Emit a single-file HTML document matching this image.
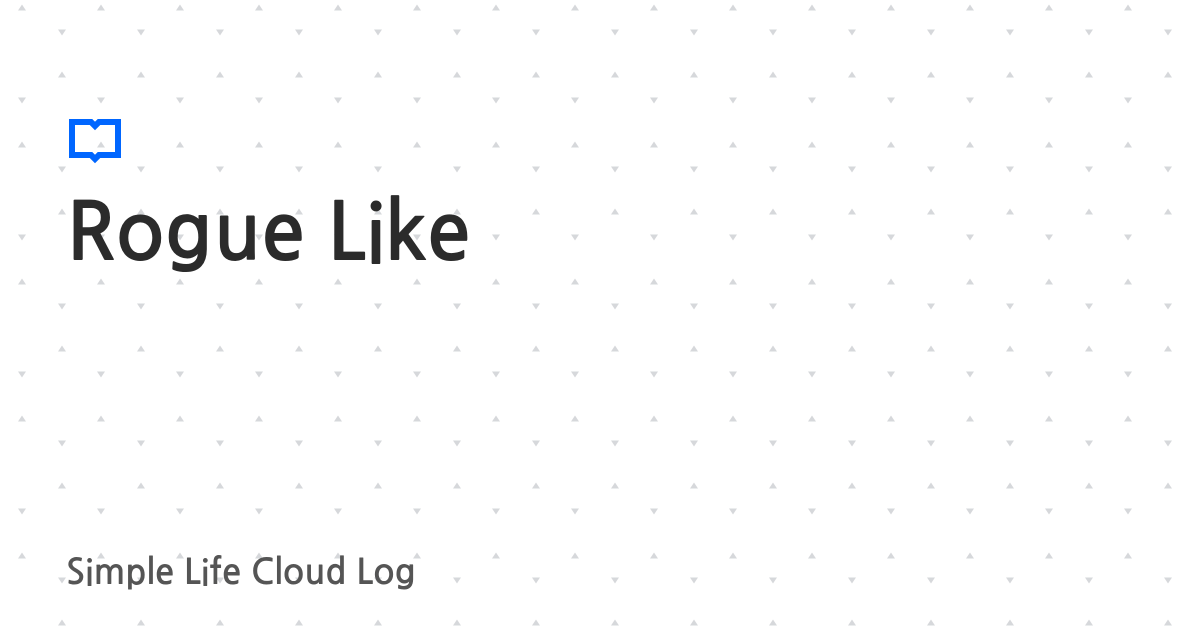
<!DOCTYPE html>
<html><head><style>
html,body{margin:0;padding:0;width:1200px;height:630px;background:#fff;overflow:hidden}
.t{position:absolute;left:66px;top:193px;font-family:"NanumGothic","Liberation Sans",sans-serif;font-weight:bold;font-size:80px;color:#2b2b2b;white-space:nowrap;letter-spacing:0}
.s{position:absolute;left:66px;top:556px;font-family:"NanumGothic","Liberation Sans",sans-serif;font-weight:bold;font-size:35px;color:#555;white-space:nowrap;letter-spacing:0}
</style></head><body>
<svg width="1200" height="630" style="position:absolute;left:0;top:0">
<defs><pattern id="p" x="22" y="8" width="79" height="137" patternUnits="userSpaceOnUse">
<g fill="#d6d8db">
<path d="M-4 2.5 L0 -3.5 L4 2.5Z"/><path d="M75 2.5 L79 -3.5 L83 2.5Z"/>
<path d="M-4 139.5 L0 133.5 L4 139.5Z"/><path d="M75 139.5 L79 133.5 L83 139.5Z"/>
<path d="M36 21.5 L44 21.5 L40 27.5Z"/>
<path d="M36 69.5 L40 63.5 L44 69.5Z"/>
<path d="M-4 89.5 L4 89.5 L0 95.5Z"/><path d="M75 89.5 L83 89.5 L79 95.5Z"/>
</g></pattern></defs>
<rect width="1200" height="630" fill="url(#p)"/>
<path d="M72 122 H91 L95 126 L99 122 H118 V155 H99 L95 159 L91 155 H72Z" fill="none" stroke="#0066ff" stroke-width="6" stroke-linejoin="miter"/>
</svg>
<div class="t">Rogue Like</div>
<div class="s">Simple Life Cloud Log</div>
</body></html>
